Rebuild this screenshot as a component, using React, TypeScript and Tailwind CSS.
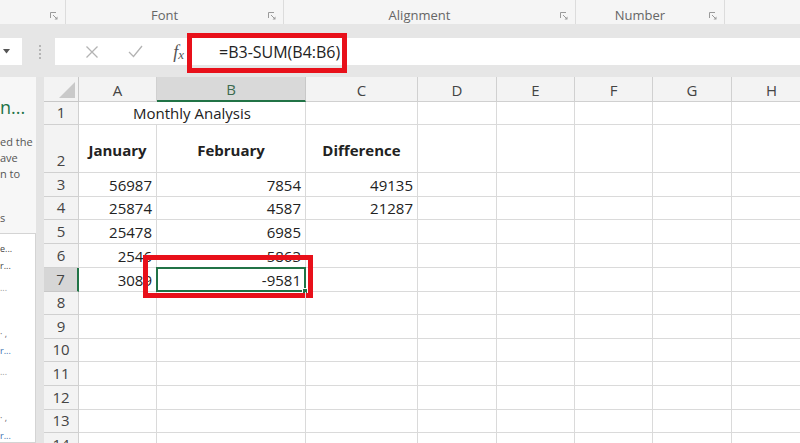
import React from 'react';

const cols = [
  { k: 'A', w: 78 },
  { k: 'B', w: 149 },
  { k: 'C', w: 112 },
  { k: 'D', w: 79 },
  { k: 'E', w: 78 },
  { k: 'F', w: 78 },
  { k: 'G', w: 79 },
  { k: 'H', w: 80 },
];

type Row = { n: number; h: number; a?: string; b?: string; c?: string };

const rows: Row[] = [
  { n: 1, h: 23 },
  { n: 2, h: 48 },
  { n: 3, h: 24, a: '56987', b: '7854', c: '49135' },
  { n: 4, h: 23, a: '25874', b: '4587', c: '21287' },
  { n: 5, h: 24, a: '25478', b: '6985' },
  { n: 6, h: 24, a: '2546', b: '5863' },
  { n: 7, h: 24, a: '3089', b: '-9581' },
  { n: 8, h: 23 },
  { n: 9, h: 24 },
  { n: 10, h: 23 },
  { n: 11, h: 24 },
  { n: 12, h: 24 },
  { n: 13, h: 23 },
  { n: 14, h: 24 },
];

// side pane list, only the tail of each line is visible
const paneItems = [
  { t: 'e...', cls: 'mt-[9px] text-[#444]' },
  { t: 'r...', cls: 'mt-[5px] text-[#444]' },
  { t: '...', cls: 'mt-[10px] text-[#999]' },
  { t: '· ,', cls: 'mt-[34px] text-[#666]' },
  { t: 'r...', cls: 'mt-[5px] text-[#3a6fb0]' },
  { t: '...', cls: 'mt-[9px] text-[#999]' },
  { t: '· ,', cls: 'mt-[34px] text-[#666]' },
  { t: 'r...', cls: 'mt-[6px] text-[#3a6fb0]' },
];

const Launcher = () => (
  <svg width="8" height="8" viewBox="0 0 8 8" className="text-[#9a9a9a]">
    <path d="M0.5 6V0.5H6" fill="none" stroke="currentColor" strokeWidth="1" />
    <path d="M3 3l3.2 3.2" stroke="currentColor" strokeWidth="1" />
    <path d="M7.5 4.5V7.5H4.5z" fill="currentColor" />
  </svg>
);

const RibbonGroup = ({ label, w }: { label?: string; w: number }) => (
  <div className="h-full flex items-end border-r border-[#dcdcdc] relative" style={{ width: w }}>
    <div className="flex-1 text-center pr-[20px] leading-[18px]">{label}</div>
    <div className="absolute right-[7px] bottom-[4px]">
      <Launcher />
    </div>
  </div>
);

const cellBase = 'h-full border-r border-b border-[#dadada] shrink-0 flex';

export default function App() {
  return (
    <div className="w-[800px] h-[443px] overflow-hidden bg-[#e6e6e6] font-['Open_Sans',sans-serif] text-[#222]">
      {/* ribbon group labels */}
      <div className="h-[24px] bg-[#f5f5f5] flex text-[13px] text-[#666]">
        <RibbonGroup w={66} />
        <RibbonGroup label="Font" w={218} />
        <RibbonGroup label="Alignment" w={292} />
        <RibbonGroup label="Number" w={149} />
        <div className="flex-1" />
      </div>
      <div className="h-[14px]" />

      {/* formula bar */}
      <div className="h-[27px] flex relative">
        <div className="w-[22px] bg-white flex items-center pl-[3px]">
          <svg width="7" height="5" viewBox="0 0 7 5">
            <path d="M0 0h7L3.5 4.5z" fill="#555" />
          </svg>
        </div>
        <div className="w-[33px] flex items-center justify-center">
          <div className="flex flex-col gap-[2px] ml-[2px]">
            {[0, 1, 2, 3].map((i) => (
              <div key={i} className="w-[2px] h-[2px] bg-[#b5b5b5]" />
            ))}
          </div>
        </div>
        <div className="flex-1 bg-white flex items-center">
          <div className="w-[44px] flex justify-end">
            <svg width="14" height="14" viewBox="0 0 14 14">
              <path d="M1.5 1.5l11 11M12.5 1.5l-11 11" stroke="#b3b3b3" strokeWidth="1.3" />
            </svg>
          </div>
          <div className="w-[44px] flex justify-end">
            <svg width="15" height="13" viewBox="0 0 15 13">
              <path d="M1 7l4.5 4.5L14 1" fill="none" stroke="#b3b3b3" strokeWidth="1.3" />
            </svg>
          </div>
          <div className="w-[44px] flex justify-end pr-[3px] font-['Liberation_Serif',serif] italic text-[18px] text-[#555] leading-none">
            <span>f</span>
            <span className="text-[13px] mt-[5px]">x</span>
          </div>
          <div className="pl-[32px] text-[16px] text-[#222] leading-none">=B3-SUM(B4:B6)</div>
        </div>
        <div className="absolute left-[187px] top-[-5px] w-[160px] h-[40px] border-[5px] border-[#e8101a]" />
      </div>
      <div className="h-[12px]" />

      {/* main area */}
      <div className="flex h-[366px]">
        {/* side pane, mostly scrolled off */}
        <div className="w-[36px] bg-[#f7f7f7] flex flex-col overflow-hidden whitespace-nowrap">
          <div className="text-[18px] text-[#217346] leading-[20px] mt-[20px]">n...</div>
          <div className="h-[20px]" />
          <div className="text-[11px] text-[#555] leading-[16px]">ed the</div>
          <div className="text-[11px] text-[#555] leading-[16px]">ave</div>
          <div className="text-[11px] text-[#555] leading-[16px]">n to</div>
          <div className="h-[32px]" />
          <div className="text-[11px] text-[#555] leading-[16px]">s</div>
          <div className="mt-[7px] flex-1 bg-white border border-[#d4d4d4] border-l-0 flex flex-col text-[9px] leading-[12px]">
            {paneItems.map((p, i) => (
              <div key={i} className={p.cls}>
                {p.t}
              </div>
            ))}
          </div>
        </div>
        <div className="w-[8px] bg-[#e4e4e4]" />

        {/* sheet */}
        <div className="flex-1 bg-white flex flex-col overflow-hidden text-[15px]">
          {/* column headers */}
          <div className="h-[25px] flex shrink-0 bg-[#f3f3f3] text-[#444]">
            <div className="w-[35px] shrink-0 h-full border-r border-b border-[#c8c8c8] flex items-end justify-end p-[3px]">
              <svg width="16" height="16" viewBox="0 0 16 16">
                <path d="M16 0V16H0z" fill="#c9c9c9" />
              </svg>
            </div>
            {cols.map((c) => (
              <div
                key={c.k}
                className={
                  'h-full shrink-0 flex items-end justify-center pb-[1px] leading-[20px] border-r ' +
                  (c.k === 'B'
                    ? 'bg-[#d9d9d9] border-b-2 border-b-[#217346] border-r-[#c8c8c8] text-[#3d6b4f]'
                    : 'border-b border-[#d0d0d0]')
                }
                style={{ width: c.w }}
              >
                {c.k}
              </div>
            ))}
          </div>

          {rows.map((r) => (
            <div key={r.n} className="flex shrink-0" style={{ height: r.h }}>
              <div
                className={
                  'w-[35px] shrink-0 h-full border-b flex items-end justify-center leading-[22px] pb-[1px] text-[#444] ' +
                  (r.n === 7
                    ? 'bg-[#d6d6d6] border-r-2 border-r-[#217346] border-b-[#c8c8c8]'
                    : 'bg-[#f3f3f3] border-r border-[#d0d0d0]')
                }
              >
                {r.n}
              </div>

              {r.n === 1 ? (
                <div className={cellBase + ' w-[227px] items-center justify-center leading-[22px]'}>Monthly Analysis</div>
              ) : r.n === 2 ? (
                <>
                  <div className={cellBase + ' w-[78px] items-center justify-center font-bold pt-[3px]'}>January</div>
                  <div className={cellBase + ' w-[149px] items-center justify-center font-bold pt-[3px]'}>February</div>
                </>
              ) : (
                <>
                  <div className={cellBase + ' w-[78px] items-end justify-end pr-[4px] leading-[22px]'}>{r.a}</div>
                  <div className={cellBase + ' w-[149px] items-end justify-end pr-[4px] leading-[22px] relative'}>
                    {r.b}
                    {r.n === 7 && (
                      <>
                        <div className="absolute -left-[1px] -top-[1px] w-[150px] h-[25px] border-2 border-[#217346]" />
                        <div className="absolute -right-[3px] -bottom-[3px] w-[6px] h-[6px] bg-[#217346] border border-white" />
                        <div className="absolute -left-[14px] -top-[13px] w-[170px] h-[43px] border-[5px] border-[#e8101a]" />
                      </>
                    )}
                  </div>
                </>
              )}

              {r.n === 2 ? (
                <div className={cellBase + ' w-[112px] items-center justify-center font-bold pt-[3px]'}>Difference</div>
              ) : (
                <div className={cellBase + ' w-[112px] items-end justify-end pr-[4px] leading-[22px]'}>{r.c}</div>
              )}
              {cols.slice(3).map((c) => (
                <div key={c.k} className={cellBase} style={{ width: c.w }} />
              ))}
            </div>
          ))}
        </div>
      </div>
    </div>
  );
}
